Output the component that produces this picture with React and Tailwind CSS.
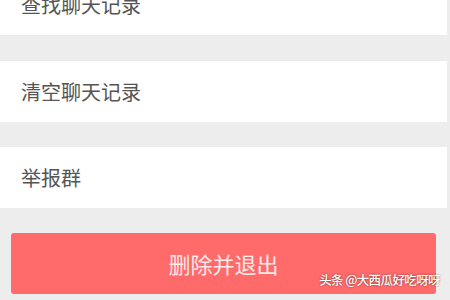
import React from 'react';

const font = { fontFamily: '"Noto Sans CJK SC", "Noto Sans", sans-serif' };

const Row = ({ label, className = '' }) => (
  <div className={`h-[61px] bg-white flex items-center pl-[21px] text-[20px] text-[#555555] ${className}`}>
    {label}
  </div>
);

const App = () => {
  return (
    <div className="w-[450px] h-[300px] overflow-hidden bg-[#ededed]" style={font}>
      <div className="mr-[3px]">
        <Row label="查找聊天记录" className="-mt-[26px]" />
        <div className="h-[26px]" />
        <Row label="清空聊天记录" />
        <div className="h-[25px]" />
        <Row label="举报群" />
        <div className="pt-[25px] px-[11px]">
          <div className="relative h-[61px] rounded-[3px] bg-[#ff6b6b] flex items-center justify-center text-[22px] text-[#fdeaea]">
            删除并退出
            <span className="absolute right-[-4px] top-[38px] text-[12.5px] font-medium text-white tracking-[-0.6px] [text-shadow:0_0_2px_rgba(0,0,0,0.6)]">
              头条 @大西瓜好吃呀呀
            </span>
          </div>
        </div>
      </div>
    </div>
  );
};

export default App;
